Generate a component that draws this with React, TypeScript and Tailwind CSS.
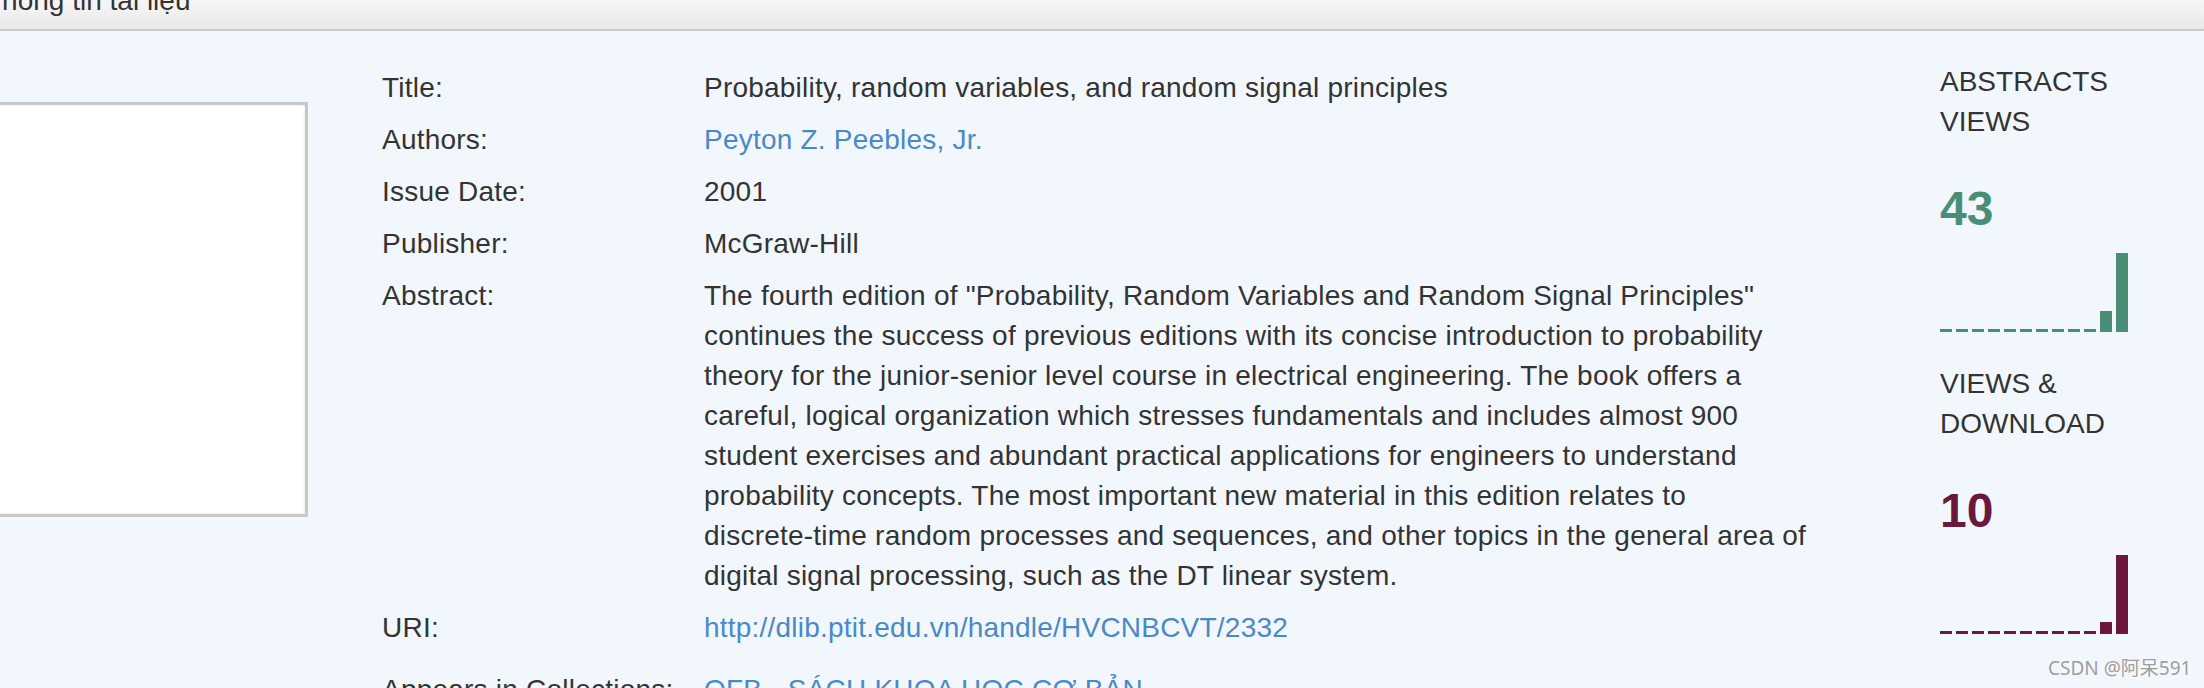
import React from 'react';

const Row: React.FC<{ label: string; children: React.ReactNode; className?: string }> = ({
  label,
  children,
  className = '',
}) => (
  <div className={`flex py-[6px] ${className}`}>
    <div className="w-[322px] shrink-0">{label}</div>
    <div className="w-[1121px]">{children}</div>
  </div>
);

const Bars: React.FC<{ values: number[]; color: string }> = ({ values, color }) => (
  <div className="flex items-end gap-[4px] h-[80px] mt-[17px]">
    {values.map((h, i) => (
      <div key={i} className={`w-[12px] ${color}`} style={{ height: h }} />
    ))}
  </div>
);

const Stat: React.FC<{
  title: React.ReactNode;
  count: number;
  textColor: string;
  barColor: string;
  values: number[];
}> = ({ title, count, textColor, barColor, values }) => (
  <div>
    <div className="leading-[40px]">{title}</div>
    <div className={`mt-[40px] text-[48px] leading-[53px] font-bold ${textColor}`}>{count}</div>
    <Bars values={values} color={barColor} />
  </div>
);

export default function App() {
  const zeros = Array.from({ length: 10 }, () => 3);

  return (
    <div className="relative w-[2204px] h-[688px] overflow-hidden bg-[#f2f7fd] text-[28px] text-[#333] font-['Liberation_Sans',Arial,sans-serif]">
      {/* panel heading, cropped at the top */}
      <div className="h-[31px] overflow-hidden border-b-2 border-[#c9c9c9] bg-linear-to-b from-[#f6f6f6] to-[#e9e9e9]">
        <div className="-mt-[19px] -ml-[15px] leading-[40px] whitespace-nowrap">Thông tin tài liệu</div>
      </div>

      <div className="flex">
        {/* thumbnail */}
        <div className="-ml-[20px] mt-[71px] w-[328px] h-[415px] shrink-0 bg-white border-[3px] border-[#c8c8c8] shadow-[inset_0_0_3px_rgba(0,0,0,0.12)]" />

        {/* metadata table */}
        <div className="ml-[74px] mt-[31px] leading-[40px] tracking-[0.22px]">
          <Row label="Title:">Probability, random variables, and random signal principles</Row>
          <Row label="Authors:">
            <a className="text-[#4a89c8]">Peyton Z. Peebles, Jr.</a>
          </Row>
          <Row label="Issue Date:">2001</Row>
          <Row label="Publisher:">McGraw-Hill</Row>
          <Row label="Abstract:">
            The fourth edition of "Probability, Random Variables and Random Signal Principles" continues the
            success of previous editions with its concise introduction to probability theory for the
            junior-senior level course in electrical engineering. The book offers a careful, logical
            organization which stresses fundamentals and includes almost 900 student exercises and abundant
            practical applications for engineers to understand probability concepts. The most important new
            material in this edition relates to <span className="whitespace-nowrap">discrete-time</span> random
            processes and sequences, and other topics in the general area of digital signal processing, such
            as the DT linear system.
          </Row>
          <Row label="URI:">
            <a className="text-[#4a89c8]">http://dlib.ptit.edu.vn/handle/HVCNBCVT/2332</a>
          </Row>
          <Row label="Appears in Collections:" className="mt-[10px]">
            <a className="text-[#4a89c8]">QFB - SÁCH KHOA HỌC CƠ BẢN</a>
          </Row>
        </div>

        {/* statistics */}
        <div className="ml-[115px] mt-[31px] w-[200px] shrink-0">
          <Stat
            title="ABSTRACTS VIEWS"
            count={43}
            textColor="text-[#4b8e77]"
            barColor="bg-[#4b8e77]"
            values={[...zeros, 21, 79]}
          />
          <div className="mt-[32px]">
            <Stat
              title="VIEWS & DOWNLOAD"
              count={10}
              textColor="text-[#6c173e]"
              barColor="bg-[#6c173e]"
              values={[...zeros, 12, 79]}
            />
          </div>
        </div>
      </div>

      <div className="absolute left-[2048px] top-[655px] text-[19px] leading-[26px] text-[#9d9d9d] whitespace-nowrap font-['Noto_Sans','Noto_Sans_CJK_SC',sans-serif] [text-shadow:0_0_2px_#fff]">
        CSDN @阿呆591
      </div>
    </div>
  );
}
